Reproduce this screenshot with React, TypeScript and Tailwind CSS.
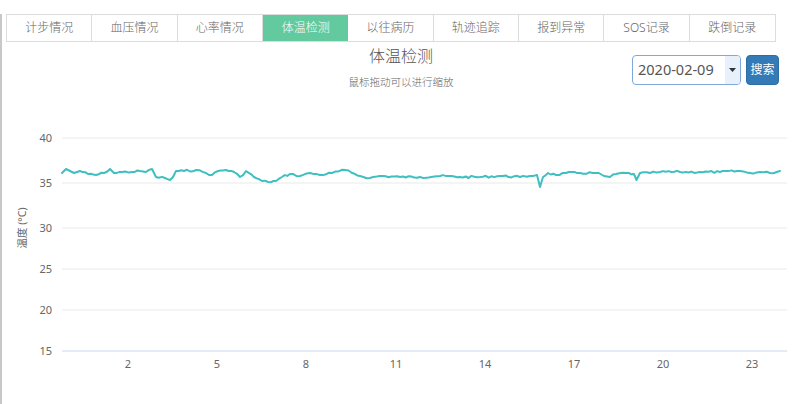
import React from "react";

const tabs = ["计步情况", "血压情况", "心率情况", "体温检测", "以往病历", "轨迹追踪", "报到异常", "SOS记录", "跌倒记录"];

const keys: [number, number][] = [
  [62, 172], [66, 168], [70, 170], [74, 172], [80, 170], [88, 173], [96, 174], [104, 172], [110, 168], [114, 172],
  [122, 171], [132, 171], [140, 170], [146, 171], [152, 168], [156, 176], [165, 177], [170, 179], [173, 176],
  [176, 170], [184, 170], [196, 169], [206, 172], [212, 174], [218, 170], [226, 169], [234, 171], [240, 176],
  [246, 170], [254, 176], [262, 180], [268, 181], [276, 180], [282, 176], [290, 173], [300, 175], [310, 172],
  [320, 174], [332, 172], [345, 169], [352, 172], [360, 175], [370, 177], [380, 175], [400, 176], [420, 176],
  [440, 175], [460, 176], [480, 176], [500, 175], [520, 176], [530, 175], [537, 174], [540, 186], [543, 176],
  [548, 172], [556, 174], [566, 172], [580, 172], [596, 172], [604, 175], [610, 176], [616, 173], [626, 172],
  [634, 173], [636.5, 179], [640, 172], [650, 172], [660, 171], [680, 171], [700, 171], [720, 171], [740, 170],
  [750, 172], [760, 171], [770, 172], [780, 170],
];

function buildPath(): string {
  const pts: string[] = [];
  let seed = 7;
  const rnd = () => {
    seed = (seed * 9301 + 49297) % 233280;
    return seed / 233280;
  };
  for (let i = 0; i < keys.length - 1; i++) {
    const [x0, y0] = keys[i];
    const [x1, y1] = keys[i + 1];
    const steps = Math.max(1, Math.round((x1 - x0) / 3));
    for (let s = 0; s < steps; s++) {
      const t = s / steps;
      const x = x0 + (x1 - x0) * t;
      let y = y0 + (y1 - y0) * t;
      if (s > 0) y += (rnd() - 0.5) * 2.2;
      pts.push(`${x.toFixed(1)},${y.toFixed(1)}`);
    }
  }
  const last = keys[keys.length - 1];
  pts.push(`${last[0]},${last[1]}`);
  return "M" + pts.join(" L");
}

const yTicks: [string, number][] = [
  ["40", 137], ["35", 182], ["30", 227], ["25", 268], ["20", 309], ["15", 350],
];
const xTicks: [string, number][] = [
  ["2", 128], ["5", 217], ["8", 306], ["11", 396], ["14", 485], ["17", 574], ["20", 663], ["23", 752],
];

export default function App() {
  const path = buildPath();
  const font = '"Noto Sans","Noto Sans CJK SC",sans-serif';
  return (
    <div className="w-[800px] h-[404px] bg-white overflow-hidden pt-[14px]" style={{ fontFamily: font }}>
      <div className="border-l-2 border-[#c8c8c8] h-[390px] flex flex-col">
        <div className="ml-[4px] w-[770px] grid grid-cols-9 border border-[#dcdcdc] h-[28px]">
          {tabs.map((t, i) => (
            <div
              key={t}
              className={
                i === 3
                  ? "flex items-center justify-center text-[12px] font-light text-white bg-[#63c99e]"
                  : "flex items-center justify-center text-[12px] font-light text-[#666] border-r border-[#dcdcdc] last:border-r-0"
              }
            >
              {t}
            </div>
          ))}
        </div>
        <div className="grid grid-cols-[1fr_auto_1fr] h-[59px]">
          <div />
          <div className="flex flex-col items-center">
            <div className="text-[16px] leading-[22px] font-light text-[#555] mt-[3px]">体温检测</div>
            <div className="text-[10.5px] leading-[14px] font-light text-[#666] mt-[8px]">鼠标拖动可以进行缩放</div>
          </div>
          <div className="flex justify-end items-start pt-[13px] pr-[21px] gap-[5px]">
            <div className="w-[109px] h-[30px] border border-[#7fa9dc] rounded-[4px] flex items-stretch overflow-hidden">
              <div className="flex-1 flex items-center pl-[5px] text-[14.5px] text-[#555]">2020-02-09</div>
              <div className="w-[15px] bg-[#e8f0fb] flex items-center justify-center">
                <svg width="7" height="4" viewBox="0 0 7 4">
                  <path d="M0 0 L7 0 L3.5 4 Z" fill="#333" />
                </svg>
              </div>
            </div>
            <button className="w-[33px] h-[30px] bg-[#337ab7] rounded-[4px] text-white text-[12px] flex items-center justify-center border border-[#2e6da4]">
              搜索
            </button>
          </div>
        </div>
        <svg width="798" height="303" viewBox="2 100 798 303" className="block">
          {yTicks.map(([l, y]) => (
            <g key={l}>
              <line x1="62" x2="787" y1={y} y2={y} stroke={l === "15" ? "#ccd6eb" : "#e9e9e9"} strokeWidth="1" />
              <text x="52" y={y + 4} textAnchor="end" fontSize="11" fill="#666" fontFamily={font}>
                {l}
              </text>
            </g>
          ))}
          {xTicks.map(([l, x]) => (
            <text key={l} x={x} y={367} textAnchor="middle" fontSize="11" fill="#666" fontFamily={font}>
              {l}
            </text>
          ))}
          <text
            x="0"
            y="0"
            transform="translate(26 227) rotate(-90)"
            textAnchor="middle"
            fontSize="10.5"
            fill="#666"
            fontFamily={font}
          >
            温度 (°C)
          </text>
          <path d={path} fill="none" stroke="#3fbfbf" strokeWidth="2" strokeLinejoin="round" strokeLinecap="round" />
        </svg>
      </div>
    </div>
  );
}
